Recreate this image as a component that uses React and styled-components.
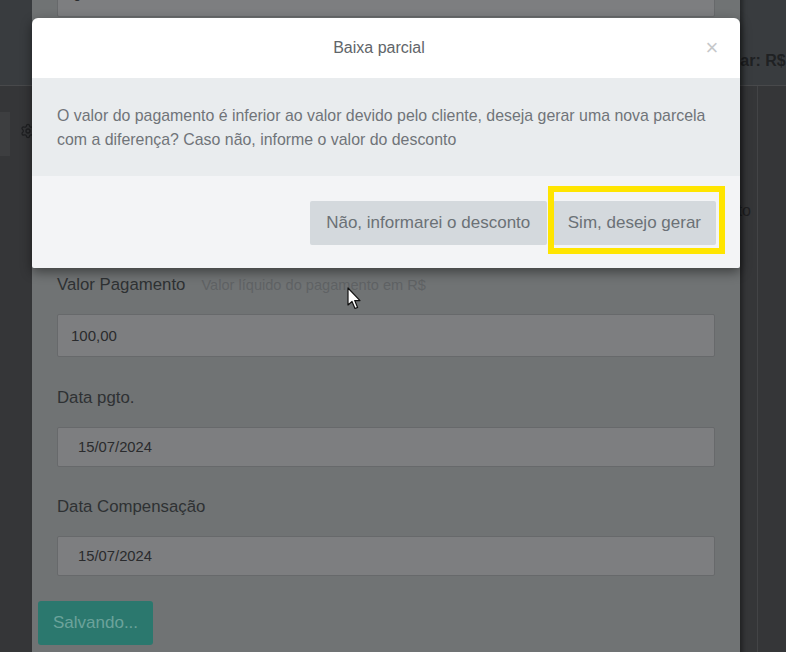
import styled, { createGlobalStyle } from "styled-components";
import { Settings } from "lucide-react";

const GlobalStyle = createGlobalStyle`
  html, body {
    margin: 0;
    background: #353638;
    font-family: "Liberation Sans", Arial, sans-serif;
  }
`;

const Screen = styled.div`
  position: relative;
  width: 786px;
  height: 652px;
  overflow: hidden;
  background: #353638;
`;

/* page underneath both modals */
const Page = styled.div`
  display: grid;
  grid-template-rows: 86px 1fr;
  height: 100%;
`;

const PageHeader = styled.header`
  display: grid;
  grid-template-columns: 657px auto;
  align-items: end;
  padding-bottom: 14px;
  background: #393c3f;
  border-bottom: 1px solid #48494b;
  white-space: nowrap;
`;

const Summary = styled.strong`
  font-size: 16px;
  line-height: 20px;
  color: #1f2123;
`;

const PageBody = styled.div`
  display: grid;
  grid-template-columns: 10px 747px 1fr;
`;

const SideTab = styled.div`
  margin-top: 26px;
  height: 44px;
  background: #3d3e40;
`;

const Details = styled.div`
  display: flex;
  flex-direction: column;
  padding: 0 6px 0 10px;
  color: #1f2022;
  font-size: 16px;
`;

const DetailIcon = styled.div`
  display: flex;
  margin-top: 37px;
  height: 16px;
`;

const DetailRow = styled.div`
  display: flex;
  justify-content: space-between;
  align-items: center;
  height: 24px;
  padding-left: 13px;
  margin-top: ${(p) => p.$top}px;
`;

const SideCard = styled.div`
  border-left: 1px solid #434446;
`;

/* form modal (dimmed by the dialog backdrop) */
const FormPanel = styled.div`
  position: absolute;
  left: 32px;
  top: -26px;
  width: 708px;
  height: 700px;
  background: #707374;
  box-shadow: 3px 0 4px rgba(0, 0, 0, 0.35);
`;

const FormBody = styled.div`
  display: flex;
  flex-direction: column;
  padding: 0 25px;
`;

const Field = styled.div`
  display: flex;
  flex-direction: column;
  margin-top: ${(p) => p.$top || 0}px;
`;

const LabelRow = styled.div`
  display: flex;
  align-items: baseline;
  gap: 16px;
  height: 24px;
  margin-bottom: 17px;
`;

const Label = styled.label`
  font-size: 16.8px;
  line-height: 24px;
  color: #2e3133;
`;

const Hint = styled.span`
  font-size: 14.6px;
  color: #5f6264;
`;

const Input = styled.div`
  display: flex;
  align-items: center;
  box-sizing: border-box;
  height: ${(p) => p.$h}px;
  padding-left: ${(p) => p.$pad}px;
  background: #7d7e80;
  border: 1px solid #67696b;
  border-radius: 2px;
  font-size: ${(p) => p.$size}px;
  color: #2a2b2d;
`;

const FormFooter = styled.div`
  display: flex;
  padding: 25px 6px 0;
`;

const SaveButton = styled.button`
  height: 44px;
  padding: 0 15px;
  border: none;
  border-radius: 3px;
  background: #2b786e;
  color: #6ca39b;
  font-family: inherit;
  font-size: 17px;
`;

/* confirmation dialog */
const Dialog = styled.div`
  position: absolute;
  left: 32px;
  top: 18px;
  width: 708px;
  border-radius: 6px 6px 2px 2px;
  overflow: hidden;
  box-shadow: 0 4px 12px rgba(0, 0, 0, 0.45);
`;

const DialogHeader = styled.div`
  display: flex;
  align-items: center;
  height: 60px;
  padding: 0 18px 0 24px;
  background: #ffffff;
`;

const DialogTitle = styled.h5`
  flex: 1;
  margin: 0;
  text-align: center;
  font-size: 16px;
  font-weight: normal;
  color: #616569;
`;

const Close = styled.span`
  width: 20px;
  text-align: center;
  font-size: 22px;
  line-height: 1;
  color: #c6c8ca;
`;

const DialogBody = styled.p`
  margin: 0;
  padding: 26px 25px 24px;
  background: #e9ecee;
  font-size: 15.9px;
  line-height: 24px;
  color: #707479;
`;

const DialogFooter = styled.div`
  display: flex;
  justify-content: flex-end;
  gap: 6px;
  padding: 25px 24px 23px;
  background: #f3f4f6;
`;

const Action = styled.button`
  position: relative;
  height: 44px;
  padding: 0 ${(p) => p.$pad}px;
  border: none;
  border-radius: 2px;
  background: #d4d9dd;
  color: #6b7176;
  font-family: inherit;
  font-size: 17px;
`;

const Highlight = styled.span`
  position: absolute;
  top: -15px;
  left: -5px;
  right: -9px;
  bottom: -9px;
  border: 6px solid #ffe500;
  pointer-events: none;
`;

const Pointer = styled.svg`
  position: absolute;
  left: 347px;
  top: 287px;
`;

export default function App() {
  return (
    <Screen>
      <GlobalStyle />
      <Page>
        <PageHeader>
          <span />
          <Summary>Total a pagar: R$ 150,00</Summary>
        </PageHeader>
        <PageBody>
          <div>
            <SideTab />
          </div>
          <Details>
            <DetailIcon>
              <Settings size={16} strokeWidth={2} color="#1f2022" />
            </DetailIcon>
            <DetailRow $top={60}>
              <span>Saldo em aberto</span>
              <span>Situação: Em aberto</span>
            </DetailRow>
            <DetailRow $top={21}>
              <span>Emissão</span>
              <span />
            </DetailRow>
            <DetailRow $top={186}>
              <span>Anexos</span>
              <span />
            </DetailRow>
          </Details>
          <SideCard />
        </PageBody>
      </Page>

      <FormPanel>
        <FormBody>
          <Input $h={43} $pad={15} $size={15}>
            0
          </Input>
          <Field $top={256}>
            <LabelRow>
              <Label>Valor Pagamento</Label>
              <Hint>Valor líquido do pagamento em R$</Hint>
            </LabelRow>
            <Input $h={43} $pad={13} $size={15}>
              100,00
            </Input>
          </Field>
          <Field $top={29}>
            <LabelRow>
              <Label>Data pgto.</Label>
            </LabelRow>
            <Input $h={40} $pad={20} $size={14.8}>
              15/07/2024
            </Input>
          </Field>
          <Field $top={28}>
            <LabelRow>
              <Label>Data Compensação</Label>
            </LabelRow>
            <Input $h={40} $pad={20} $size={14.8}>
              15/07/2024
            </Input>
          </Field>
        </FormBody>
        <FormFooter>
          <SaveButton>Salvando...</SaveButton>
        </FormFooter>
      </FormPanel>

      <Pointer width="16" height="24" viewBox="0 0 16 24">
        <path
          d="M1 1 L1 18 L5 14.5 L8 21.5 L10.6 20.4 L7.7 13.6 L13 13.6 Z"
          fill="#ffffff"
          stroke="#111"
          strokeWidth="1.2"
          strokeLinejoin="round"
        />
      </Pointer>

      <Dialog>
        <DialogHeader>
          <DialogTitle>Baixa parcial</DialogTitle>
          <Close>×</Close>
        </DialogHeader>
        <DialogBody>
          O valor do pagamento é inferior ao valor devido pelo cliente, deseja gerar uma nova parcela
          com a diferença? Caso não, informe o valor do desconto
        </DialogBody>
        <DialogFooter>
          <Action $pad={16.5}>Não, informarei o desconto</Action>
          <Action $pad={15}>
            Sim, desejo gerar
            <Highlight />
          </Action>
        </DialogFooter>
      </Dialog>
    </Screen>
  );
}
